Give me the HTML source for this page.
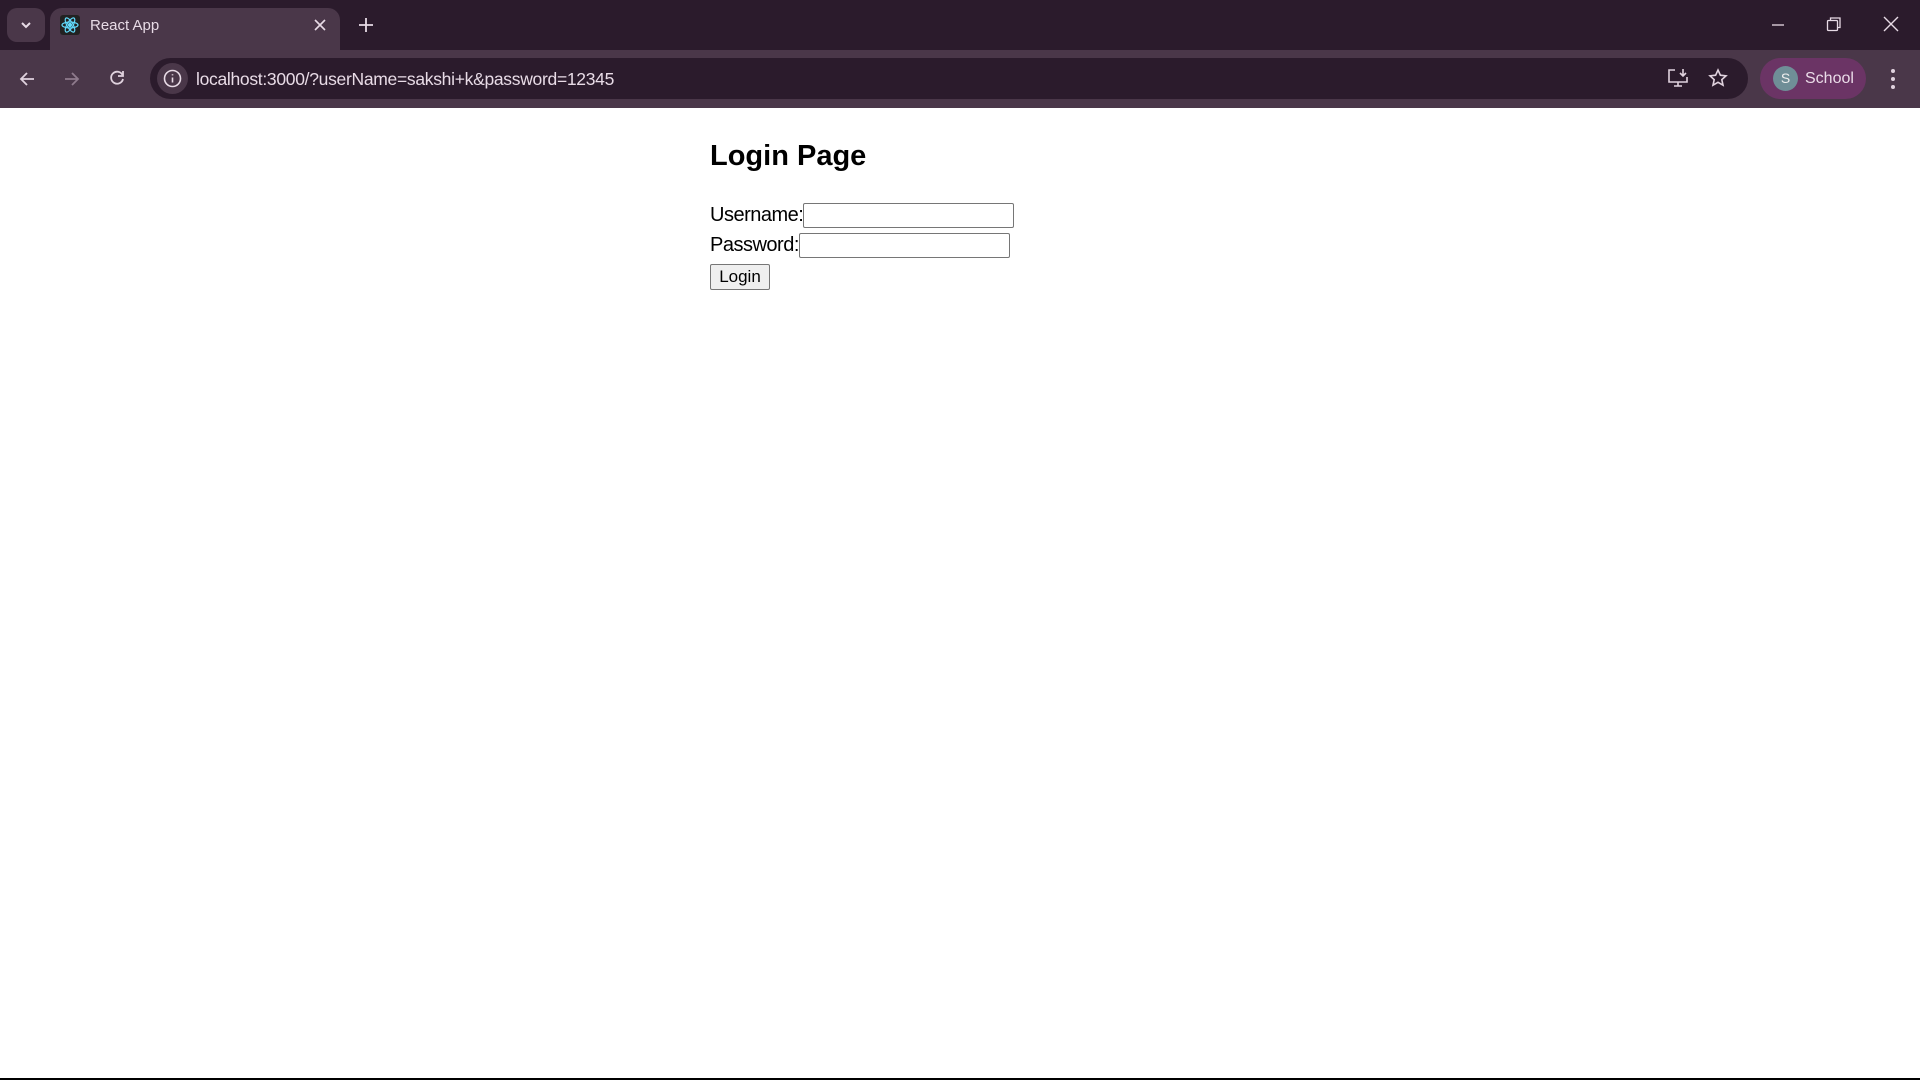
<!DOCTYPE html>
<html><head><meta charset="utf-8"><style>
*{box-sizing:border-box;margin:0;padding:0}
html,body{width:1920px;height:1080px;overflow:hidden;background:#fff;font-family:"Liberation Sans",sans-serif}
.strip{position:absolute;left:0;top:0;width:1920px;height:50px;background:#2b1b2c}
.tbtn{position:absolute;left:7px;top:8px;width:38px;height:34px;border-radius:10px;background:#4a3749}
.tab{position:absolute;left:50px;top:8px;width:290px;height:44px;background:#4a3749;border-radius:12px 12px 0 0}
.tabtxt{position:absolute;left:90px;top:17px;color:#e8dbe6;font-size:15px}
.toolbar{position:absolute;left:0;top:50px;width:1920px;height:58px;background:#4a3749}
.omni{position:absolute;left:150px;top:58px;width:1598px;height:41px;border-radius:21px;background:#2b1b2c}
.url{position:absolute;left:196px;top:69px;color:#e8dbe6;font-size:17.5px;letter-spacing:-0.3px}
.prof{position:absolute;left:1760px;top:58px;width:106px;height:41px;border-radius:21px;background:#6b3465}
.av{position:absolute;left:1773px;top:66px;width:25px;height:25px;border-radius:50%;background:#6f8e97;color:#eee;font-size:14px;text-align:center;line-height:25px}
.school{position:absolute;left:1805px;top:70px;color:#eadbe8;font-size:16px}
.bottom{position:absolute;left:0;top:1078px;width:1920px;height:2px;background:#000}
h2{position:absolute;left:710px;top:140px;font-size:29px;font-weight:bold;color:#000;font-family:"Liberation Sans",sans-serif}
.row{position:absolute;left:710px;font-size:20px;color:#000;height:25px;display:flex;align-items:center;white-space:nowrap;letter-spacing:-0.5px}
.inp{display:inline-block;width:211px;height:25px;border:1px solid #767676;border-radius:2px;background:#fff}
.btn{position:absolute;left:710px;top:264px;width:60px;height:26px;border:1px solid #767676;border-radius:2px;background:#efefef;font-size:17px;text-align:center;line-height:24px}
svg{position:absolute}
</style></head><body>
<div class="strip"></div>
<div class="tbtn"></div>
<svg style="left:19px;top:19px" width="14" height="12" viewBox="0 0 14 12"><path d="M3 4l4 4 4-4" stroke="#e8dbe6" stroke-width="2" fill="none"/></svg>
<div class="tab"></div>
<div style="position:absolute;left:60px;top:15px;width:20px;height:20px;background:#222;border-radius:3px"></div>
<svg style="left:60px;top:15px" width="20" height="20" viewBox="0 0 20 20" fill="none" stroke="#61dafb" stroke-width="1.2"><ellipse cx="10" cy="10" rx="8" ry="3"/><ellipse cx="10" cy="10" rx="8" ry="3" transform="rotate(60 10 10)"/><ellipse cx="10" cy="10" rx="8" ry="3" transform="rotate(120 10 10)"/><circle cx="10" cy="10" r="1.5" fill="#61dafb"/></svg>
<div class="tabtxt">React App</div>
<svg style="left:313px;top:18px" width="14" height="14" viewBox="0 0 14 14"><path d="M2 2l10 10M12 2L2 12" stroke="#e8dbe6" stroke-width="1.6"/></svg>
<svg style="left:358px;top:17px" width="16" height="16" viewBox="0 0 16 16"><path d="M8 1v14M1 8h14" stroke="#e8dbe6" stroke-width="1.8"/></svg>
<svg style="left:1770px;top:18px" width="16" height="16" viewBox="0 0 16 16"><path d="M2 7h12" stroke="#e8dbe6" stroke-width="1.3"/></svg>
<svg style="left:1826px;top:16px" width="16" height="16" viewBox="0 0 16 16" fill="none" stroke="#e8dbe6" stroke-width="1.3"><rect x="1.5" y="4.5" width="10" height="10" rx="1"/><path d="M4.5 4.5V2h9.5v9.5h-2.5"/></svg>
<svg style="left:1883px;top:16px" width="16" height="16" viewBox="0 0 16 16"><path d="M1 1l14 14M15 1L1 15" stroke="#e8dbe6" stroke-width="1.4"/></svg>
<div class="toolbar"></div>
<svg style="left:18px;top:70px" width="18" height="18" viewBox="0 0 18 18" fill="none" stroke="#e0d2de" stroke-width="1.8"><path d="M16 9H3M9 3L3 9l6 6"/></svg>
<svg style="left:63px;top:70px" width="18" height="18" viewBox="0 0 18 18" fill="none" stroke="#8f7b8d" stroke-width="1.8"><path d="M2 9h13M9 3l6 6-6 6"/></svg>
<svg style="left:108px;top:69px" width="18" height="18" viewBox="0 0 18 18" fill="none" stroke="#e0d2de" stroke-width="1.8"><path d="M14.5 6A6 6 0 1 0 15 10"/><path d="M15 2v5h-5" fill="none"/></svg>
<div class="omni"></div>
<div style="position:absolute;left:157px;top:63px;width:31px;height:31px;border-radius:50%;background:#4a3749"></div>
<svg style="left:163px;top:69px" width="19" height="19" viewBox="0 0 19 19" fill="none" stroke="#e8dbe6" stroke-width="1.6"><circle cx="9.5" cy="9.5" r="8"/><path d="M9.5 8.5v5M9.5 5.2v1.2"/></svg>
<div class="url">localhost:3000/?userName=sakshi+k&amp;password=12345</div>
<svg style="left:1667px;top:68px" width="22" height="20" viewBox="0 0 22 20" fill="none" stroke="#e0d2de" stroke-width="1.6"><path d="M8 2H2v12h18V9"/><path d="M7 18h8M11 14v4M16 1v7M13 5l3 3 3-3"/></svg>
<svg style="left:1708px;top:68px" width="20" height="20" viewBox="0 0 20 20" fill="none" stroke="#e0d2de" stroke-width="1.6"><path d="M10 2l2.4 5.2 5.6.6-4.2 3.8 1.2 5.6L10 14.3 5 17.2l1.2-5.6L2 7.8l5.6-.6z"/></svg>
<div class="prof"></div>
<div class="av">S</div>
<div class="school">School</div>
<svg style="left:1890px;top:68px" width="6" height="22" viewBox="0 0 6 22" fill="#e0d2de"><circle cx="3" cy="3" r="2"/><circle cx="3" cy="11" r="2"/><circle cx="3" cy="19" r="2"/></svg>

<h2>Login Page</h2>
<div class="row" style="top:203px">Username:<span class="inp"></span></div>
<div class="row" style="top:233px">Password:<span class="inp"></span></div>
<div class="btn">Login</div>
<div class="bottom"></div>
</body></html>
